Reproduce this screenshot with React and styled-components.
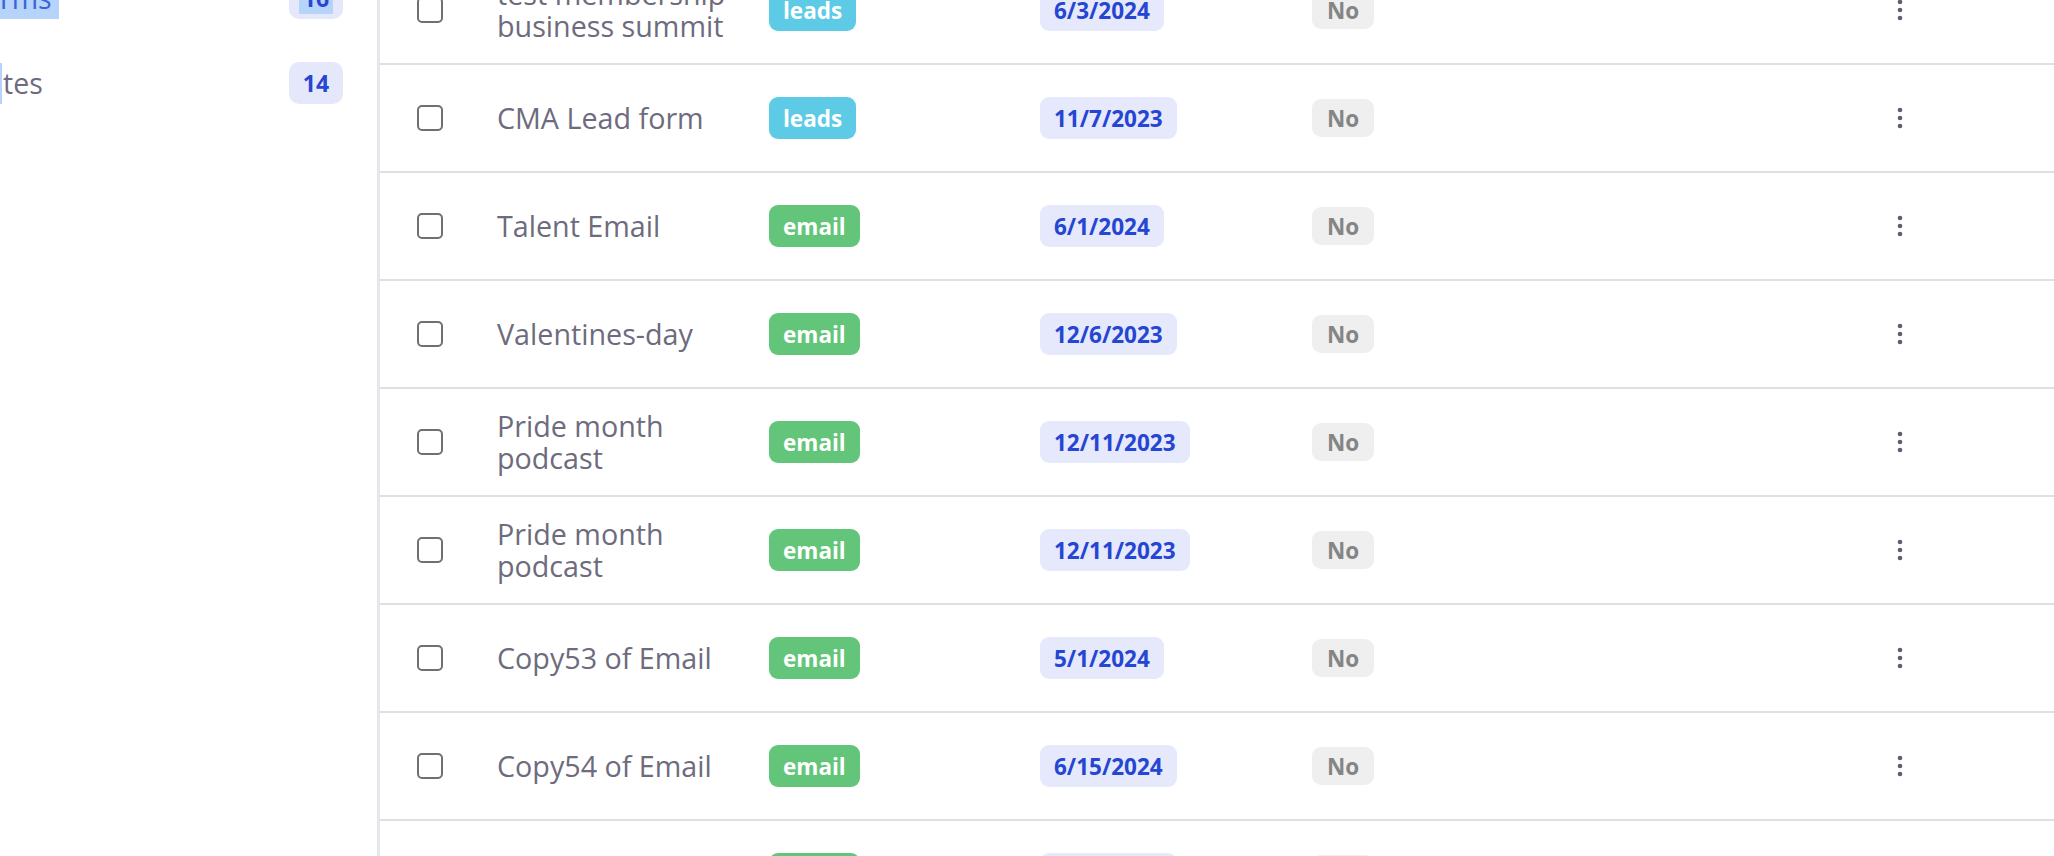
import styled, { createGlobalStyle } from "styled-components";

const GlobalStyle = createGlobalStyle`
  html, body {
    margin: 0;
    padding: 0;
    background: #fff;
    font-family: "Open Sans", "Liberation Sans", sans-serif;
    overflow: hidden;
  }
`;

const folders = [
  { id: "forms", label: "rms", count: 16, selected: true },
  { id: "templates", label: "tes", count: 14, caret: true },
];

const campaigns = [
  { id: 1, name: "test membership business summit", tag: "leads", date: "6/3/2024", archived: "No" },
  { id: 2, name: "CMA Lead form", tag: "leads", date: "11/7/2023", archived: "No" },
  { id: 3, name: "Talent Email", tag: "email", date: "6/1/2024", archived: "No" },
  { id: 4, name: "Valentines-day", tag: "email", date: "12/6/2023", archived: "No" },
  { id: 5, name: "Pride month podcast", tag: "email", date: "12/11/2023", archived: "No" },
  { id: 6, name: "Pride month podcast", tag: "email", date: "12/11/2023", archived: "No" },
  { id: 7, name: "Copy53 of Email", tag: "email", date: "5/1/2024", archived: "No" },
  { id: 8, name: "Copy54 of Email", tag: "email", date: "6/15/2024", archived: "No" },
  { id: 9, name: "Copy55 of Email", tag: "email", date: "6/20/2024", archived: "No" },
];

const tagColors = {
  leads: "#5ecbe6",
  email: "#63c57a",
};

const MoreIcon = () => (
  <svg width="6" height="22" viewBox="0 0 6 22" fill="#5f5d73">
    <circle cx="3" cy="3" r="2.3" />
    <circle cx="3" cy="11" r="2.3" />
    <circle cx="3" cy="19" r="2.3" />
  </svg>
);

const App = () => {
  return (
    <>
      <GlobalStyle />
      <Page>
        <Sidebar>
          <FolderList>
            {folders.map((folder) => (
              <FolderItem key={folder.id}>
                <FolderLabel>
                  {folder.caret && <Caret />}
                  {folder.selected ? <Selected>{folder.label}</Selected> : folder.label}
                </FolderLabel>
                <CountBadge>
                  {folder.selected ? <SelectedCount>{folder.count}</SelectedCount> : folder.count}
                </CountBadge>
              </FolderItem>
            ))}
          </FolderList>
        </Sidebar>
        <Main>
          <Table>
            {campaigns.map((row) => (
              <Row key={row.id}>
                <CheckCell>
                  <Checkbox type="checkbox" aria-label={`Select ${row.name}`} />
                </CheckCell>
                <Name>{row.name}</Name>
                <Tag $color={tagColors[row.tag]}>{row.tag}</Tag>
                <DateBadge>{row.date}</DateBadge>
                <Flag>{row.archived}</Flag>
                <Actions>
                  <MoreIcon />
                </Actions>
              </Row>
            ))}
          </Table>
        </Main>
      </Page>
    </>
  );
};

export default App;

const Page = styled.div`
  display: flex;
  height: 100vh;
  overflow: hidden;
`;

const Sidebar = styled.aside`
  width: 377px;
  flex-shrink: 0;
  border-right: 3px solid #e6e6ef;
  overflow: hidden;
`;

const FolderList = styled.div`
  margin-top: -45px;
  display: flex;
  flex-direction: column;
`;

const FolderItem = styled.div`
  height: 85px;
  display: flex;
  align-items: center;
  justify-content: space-between;
  padding-right: 34px;
`;

const FolderLabel = styled.span`
  display: flex;
  align-items: center;
  gap: 1px;
  font-size: 28.5px;
  color: #6d6b7d;
  line-height: 42px;
`;

const Selected = styled.span`
  background: #b5d3fb;
  color: #3a66d4;
  padding-right: 7px;
`;

const Caret = styled.span`
  display: inline-block;
  width: 2px;
  height: 41px;
  background: #b5d3fb;
  margin-top: 1px;
`;

const CountBadge = styled.span`
  display: inline-flex;
  align-items: center;
  justify-content: center;
  min-width: 54px;
  height: 42px;
  box-sizing: border-box;
  border-radius: 10px;
  background: #e5e8fb;
  color: #2a45d0;
  font-size: 23px;
  font-weight: 700;
`;

const SelectedCount = styled.span`
  background: #b5d3fb;
  padding: 0 4px;
`;

const Main = styled.main`
  flex: 1;
  overflow: hidden;
`;

const Table = styled.div`
  margin-top: -43px;
  display: flex;
  flex-direction: column;
`;

const Row = styled.div`
  display: grid;
  grid-template-columns: 117px 272px 271px 272px 1fr 308px;
  align-items: center;
  height: 108px;
  box-sizing: border-box;
  border-bottom: 2px solid #e0e0e0;
`;

const CheckCell = styled.div`
  padding-left: 37px;
  display: flex;
  align-items: center;
`;

const Checkbox = styled.input`
  appearance: none;
  margin: 0;
  width: 26px;
  height: 26px;
  box-sizing: border-box;
  border: 2px solid #707070;
  border-radius: 5px;
  background: #fff;
`;

const Name = styled.div`
  max-width: 250px;
  font-size: 28.7px;
  line-height: 32px;
  color: #6d6b7d;
`;

const Pill = styled.span`
  justify-self: start;
  display: inline-flex;
  align-items: center;
  height: 42px;
  padding: 0 14px;
  border-radius: 9px;
  font-size: 22.5px;
  font-weight: 700;
`;

const Tag = styled(Pill)`
  background: ${(p) => p.$color};
  color: #fff;
`;

const DateBadge = styled(Pill)`
  background: #e6e9fb;
  color: #2545d3;
`;

const Flag = styled(Pill)`
  height: 38px;
  padding: 0 15px;
  background: #efefef;
  color: #858585;
`;

const Actions = styled.div`
  display: flex;
  justify-content: center;
  align-items: center;
`;
